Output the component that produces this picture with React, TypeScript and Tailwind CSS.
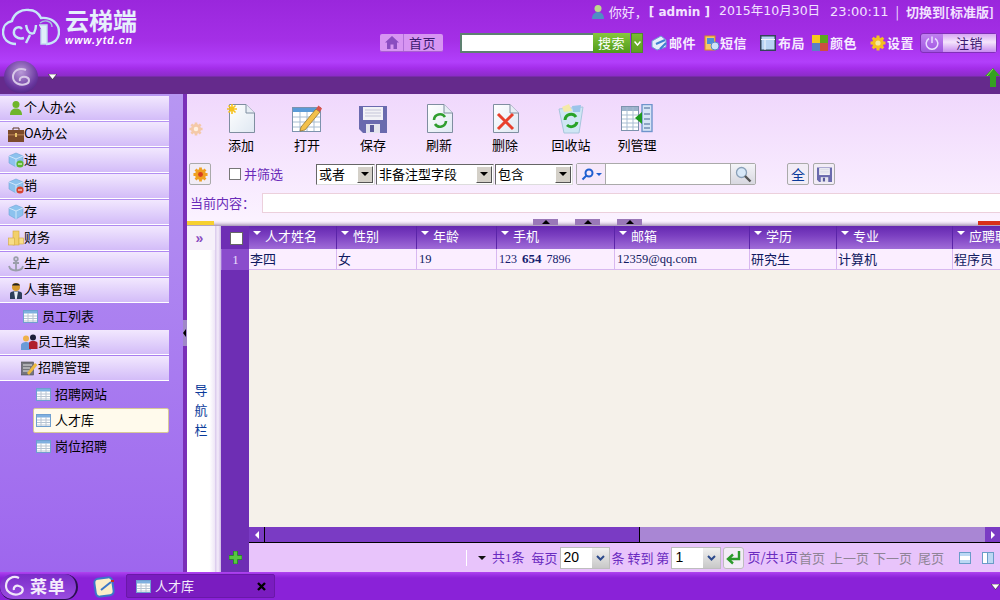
import React from "react";

const cjk = { fontFamily: '"Noto Sans CJK SC", "Liberation Sans", sans-serif' };

function Doc({ mark }: { mark: React.ReactNode }) {
  return (
    <svg width="32" height="32" viewBox="0 0 32 32">
      <defs>
        <linearGradient id="docg" x1="0" y1="0" x2="1" y2="1">
          <stop offset="0" stopColor="#ffffff" />
          <stop offset="1" stopColor="#dfe8f2" />
        </linearGradient>
      </defs>
      <path d="M4.5 1.5H21L29.5 10V29.5H4.5Z" fill="url(#docg)" stroke="#7f8ea0" />
      <path d="M21 1.5V10H29.5" fill="#e8eef5" stroke="#7f8ea0" />
      {mark}
    </svg>
  );
}

const AddIcon = () => (
  <Doc
    mark={
      <g stroke="#f6c21c" strokeWidth="1.6">
        <path d="M7 1V11M2 6H12M3.5 2.5L10.5 9.5M10.5 2.5L3.5 9.5" />
      </g>
    }
  />
);
const RefreshIcon = () => (
  <Doc
    mark={
      <g fill="none" stroke="#2f9e2f" strokeWidth="2.6">
        <path d="M11 17A6 6 0 0 1 22 14" />
        <path d="M23 18A6 6 0 0 1 12 21" />
      </g>
    }
  />
);
const DeleteIcon = () => (
  <Doc mark={<path d="M9 11L24 26M24 11L9 26" stroke="#e8402c" strokeWidth="3" />} />
);
const OpenIcon = () => (
  <svg width="32" height="32" viewBox="0 0 32 32">
    <rect x="1.5" y="4.5" width="28" height="24" fill="#fff" stroke="#7d93ad" />
    <rect x="2" y="5" width="27" height="4" fill="#5b9bd8" />
    <path d="M2 14H29M2 19H29M2 24H29M9 9V28M16 9V28M23 9V28" stroke="#a9bdd2" />
    <path d="M10 24L25 6L29 9L14 27L9 28Z" fill="#f3c04a" stroke="#8a6a22" strokeWidth=".7" />
    <path d="M25 6L27.5 2.5L31 5.5L29 9Z" fill="#d9534a" />
  </svg>
);
const SaveIcon = ({ s = 28 }: { s?: number }) => (
  <svg width={s} height={s} viewBox="0 0 28 28">
    <path d="M0 1H28V28H4L0 24Z" fill="#6a6aae" />
    <rect x="4" y="2" width="20" height="13" fill="#f2f2f6" />
    <path d="M6 5H22M6 8H22M6 11H22" stroke="#c5c5d8" />
    <rect x="7" y="19" width="14" height="9" fill="#e4e4ee" />
    <rect x="11" y="20" width="4" height="7" fill="#5a5a9a" />
  </svg>
);
const BinIcon = () => (
  <svg width="30" height="32" viewBox="0 0 30 32">
    <path d="M3 6L27 4L23 30H8Z" fill="#cfe6f4" stroke="#a8c6dc" />
    <path d="M6 4L13 1L16 8L8 9Z" fill="#f4e9a8" />
    <path d="M16 3L25 2L24 9L17 9Z" fill="#9cc4ea" />
    <g fill="none" stroke="#27a327" strokeWidth="3">
      <path d="M9 17A6 6 0 0 1 20 14" />
      <path d="M21 19A6 6 0 0 1 11 22" />
    </g>
  </svg>
);
const ColsIcon = () => (
  <svg width="32" height="30" viewBox="0 0 32 30">
    <rect x="0.5" y="2.5" width="17" height="24" fill="#fff" stroke="#7d93ad" />
    <rect x="1" y="3" width="16" height="4" fill="#9db3cc" />
    <path d="M1 11H17M1 15H17M1 19H17M1 23H17M6 3V26M12 3V26" stroke="#a9bdd2" />
    <rect x="21" y="0.5" width="10" height="27" fill="#d6e4f6" stroke="#6f94cc" strokeWidth="1.4" />
    <path d="M23 4H29M23 10H29M23 15H29M23 20H29M23 24H29" stroke="#8ba4c4" strokeWidth="2" />
    <path d="M21 8V20L14 14Z" fill="#1e9a1e" />
  </svg>
);
const Gear = ({ s = 16, c = "#f0a020", h = "#fff2c0" }: { s?: number; c?: string; h?: string }) => (
  <svg width={s} height={s} viewBox="0 0 16 16">
    <g stroke={c} strokeWidth="3">
      <path d="M8 0.5V15.5M0.5 8H15.5M2.7 2.7L13.3 13.3M13.3 2.7L2.700 13.300" />
    </g>
    <circle cx="8" cy="8" r="5.8" fill={c} />
    <circle cx="8" cy="8" r="2.6" fill={h} />
  </svg>
);
const Grid = () => (
  <svg width="15" height="13" viewBox="0 0 15 13" className="shrink-0">
    <rect x="0.5" y="0.5" width="14" height="12" fill="#fff" stroke="#6f9fd0" />
    <rect x="1" y="1" width="13" height="2.5" fill="#7fb0e0" />
    <path d="M1 6H14M1 8.5H14M1 11H14M5 3V12M10 3V12" stroke="#b8c4d2" />
  </svg>
);
const Box = ({ badge }: { badge?: string }) => (
  <svg width="16" height="16" viewBox="0 0 16 16">
    <path d="M1 4L8 1L15 4V11L8 15L1 11Z" fill="#8cc2ee" stroke="#6ea4d6" strokeWidth=".6" />
    <path d="M1 4L8 7L15 4M8 7V15" fill="none" stroke="#cfe6fa" />
    {badge && <circle cx="12" cy="12" r="3.6" fill={badge} />}
    {badge && <path d="M10 12H14" stroke="#fff" />}
  </svg>
);
const Person = ({ c = "#6fb52a" }: { c?: string }) => (
  <svg width="14" height="16" viewBox="0 0 14 16">
    <circle cx="7" cy="4.5" r="3.5" fill={c} />
    <path d="M1 15C1 10 4 8.5 7 8.5S13 10 13 15Z" fill={c} />
  </svg>
);

const iconNodes: Record<string, React.ReactNode> = {
  person: <Person />,
  brief: (
    <svg width="16" height="15" viewBox="0 0 16 15">
      <rect x="0" y="3" width="16" height="12" fill="#7b4a2b" />
      <path d="M5 3V1H11V3" fill="none" stroke="#5b3620" />
      <rect x="0" y="7" width="16" height="1.5" fill="#a77248" />
      <rect x="7" y="6" width="2" height="4" fill="#e9c46a" />
    </svg>
  ),
  in: <Box badge="#5cb531" />,
  out: <Box badge="#d8432f" />,
  box: <Box />,
  coin: (
    <svg width="16" height="16" viewBox="0 0 16 16">
      <rect x="5" y="1" width="6" height="14" fill="#f2d06a" stroke="#d2a83c" strokeWidth=".6" />
      <rect x="0.5" y="8" width="6" height="7" fill="#f7dd88" stroke="#d2a83c" strokeWidth=".6" />
      <rect x="11" y="8" width="4.5" height="6" fill="#f7dd88" stroke="#d2a83c" strokeWidth=".6" />
    </svg>
  ),
  anchor: (
    <svg width="16" height="16" viewBox="0 0 16 16" fill="none" stroke="#9a9eaa" strokeWidth="1.8">
      <circle cx="8" cy="3" r="1.8" />
      <path d="M8 5V14M5 7H11M1 10C2 14 5 14.5 8 14.5S14 14 15 10" />
    </svg>
  ),
  hr: (
    <svg width="14" height="17" viewBox="0 0 14 17">
      <circle cx="7" cy="5" r="4" fill="#d69a2c" />
      <path d="M3 3.5C4 0.5 10 0.5 11 3.5Z" fill="#222" />
      <path d="M1 17V11.5C1 10 4 9 7 9S13 10 13 11.5V17Z" fill="#2d3f5c" />
      <path d="M5 9.5H9L7.8 17H6.2Z" fill="#e8f0f8" />
    </svg>
  ),
  people: (
    <svg width="17" height="16" viewBox="0 0 17 16">
      <circle cx="5" cy="4.5" r="3" fill="#efb14a" />
      <path d="M0 16V11C0 9 3 8 5 8S10 9 10 11V16Z" fill="#6a9ad8" />
      <circle cx="12" cy="3.5" r="3" fill="#1d1d3a" />
      <path d="M8 15V9C8 7.5 10 7 12 7S16.500 7.500 16.500 9V15Z" fill="#b01f2e" />
    </svg>
  ),
  note: (
    <svg width="17" height="16" viewBox="0 0 17 16">
      <rect x="0.5" y="2" width="12" height="13" fill="#75757d" stroke="#4a4a50" strokeWidth=".6" />
      <path d="M2 5H11M2 8H9M2 11H8" stroke="#e8e8e8" />
      <path d="M6 13L14 3L16.500 5L8 15Z" fill="#edb93e" />
    </svg>
  ),
};

function Item({ icon, label, pl }: { icon: string; label: string; pl: string }) {
  return (
    <div className={`h-[25px] mb-[1px] w-[169px] flex items-center border-b border-white bg-gradient-to-b from-[#f2e8fe] to-[#d3bcf8] text-[13px] text-black ${pl}`}>
      <span className="w-[17px] flex justify-center shrink-0">{iconNodes[icon]}</span>
      <span className="mb-[2px]">{label}</span>
    </div>
  );
}
function Sub({ label, indent, active }: { label: string; indent: string; active?: boolean }) {
  return (
    <div className={`h-[26px] flex items-start text-[13px] text-black ${indent}`}>
      <div className={`flex items-center gap-[4px] h-[25px] w-full ${active ? "bg-[#fffaec] border border-[#d8c898] rounded-[2px]" : "border border-transparent"}`}>
        <span className="ml-[2px] flex"><Grid /></span>
        <span className="mb-[2px]">{label}</span>
      </div>
    </div>
  );
}

function Tool({ icon, label }: { icon: React.ReactNode; label: string }) {
  return (
    <div className="w-[66px] flex flex-col items-center">
      <div className="h-[32px] flex items-center justify-center">{icon}</div>
      <div className="mt-[2px] text-[13px] leading-[16px] text-black">{label}</div>
    </div>
  );
}

function Sel({ label, w }: { label: string; w: string }) {
  return (
    <div className={`${w} h-[21px] bg-white border border-t-[#666] border-l-[#666] border-r-[#ddd] border-b-[#ddd] flex items-center justify-between text-[13px] text-black pl-[2px] pr-[1px]`}>
      <span>{label}</span>
      <span className="w-[16px] h-[17px] bg-[#d4d0c8] border border-t-white border-l-white border-r-[#555] border-b-[#555] flex items-center justify-center">
        <span className="w-0 h-0 border-x-[4px] border-x-transparent border-t-[4px] border-t-black" />
      </span>
    </div>
  );
}

function Caret({ c = "#fff" }: { c?: string }) {
  return <span className="block w-0 h-0 border-x-[4px] border-x-transparent border-t-[4px]" style={{ borderTopColor: c }} />;
}

const cols = [
  { t: "人才姓名", w: "w-[88px]", v: "李四", cjk: true },
  { t: "性别", w: "w-[80px]", v: "女", cjk: true },
  { t: "年龄", w: "w-[80px]", v: "19" },
  { t: "手机", w: "w-[118px]", v: "phone" },
  { t: "邮箱", w: "w-[135px]", v: "12359@qq.com" },
  { t: "学历", w: "w-[87px]", v: "研究生", cjk: true },
  { t: "专业", w: "w-[116px]", v: "计算机", cjk: true },
  { t: "应聘职位", w: "w-[60px]", v: "程序员", cjk: true },
];

function PagerSelect({ v }: { v: string }) {
  return (
    <div className="w-[50px] h-[22px] bg-white border border-[#bdbdbd] flex items-center justify-between">
      <span className="pl-[3px] text-[14px] text-black" style={{ fontFamily: '"Liberation Sans", sans-serif' }}>{v}</span>
      <span className="w-[17px] h-full bg-gradient-to-b from-[#f0f0f0] to-[#c8c8c8] flex items-center justify-center">
        <svg width="9" height="6" viewBox="0 0 9 6"><path d="M1 1L4.500 4.500L8 1" fill="none" stroke="#2c4a8c" strokeWidth="2" /></svg>
      </span>
    </div>
  );
}

export default function App() {
  return (
    <div className="w-[1000px] h-[600px] overflow-hidden flex flex-col" style={cjk}>
      {/* Header */}
      <header className="h-[94px] shrink-0 flex flex-col bg-[linear-gradient(180deg,#9a27dc_0px,#a42fe6_40px,#b23ffb_62px,#a42eea_68px,#8c2cc8_76px,#652a8c_77px,#652a8c_94px)]">
        <div className="h-[60px] flex">
          <div className="w-[380px] shrink-0 flex items-start pt-[7px] pl-[2px]">
            <svg width="58" height="40" viewBox="0 0 58 40" fill="none" stroke="#c8e6f8" strokeWidth="2.4">
              <path d="M14 37C6 37 1 32 1 25C1 19 5 15 10 14C12 6 20 2 27 3C33 3 37 7 39 11C49 10 57 16 57 25C57 32 52 37 44 37" />
              <path d="M22 31C15 33 11 28 12 24C13 20 18 19 20 22" />
              <path d="M24 18C25 24 28 28 32 26C33 24 34 21 34 18M28 28L24 36" />
              <path d="M37 18H45V37H39V22" fill="#dfeffa" stroke="#c0dcee" strokeWidth="1.4" />
              <path d="M38 16C43 12 50 14 50 20" stroke="#a8c4e0" strokeWidth="1.4" />
            </svg>
            <div className="ml-[5px] text-white">
              <div className="text-[24px] leading-[24px] font-bold text-[#e6f0fb] mt-[1px]">云梯端</div>
              <div className="text-[10.5px] leading-[12px] mt-[2px] italic font-bold tracking-[1px]" style={{ fontFamily: '"Liberation Sans", sans-serif' }}>www.ytd.cn</div>
            </div>
          </div>
          <div className="flex-1 flex flex-col">
            <div className="h-[21px] pt-[2px] flex items-center justify-end text-[#f2e2ff] text-[13px] whitespace-nowrap">
              <span className="mr-[4px] flex"><svg width="14" height="15" viewBox="0 0 14 15"><circle cx="7" cy="4.500" r="3.500" fill="#bcd98a" /><path d="M1 15C1 10 4 8 7 8S13 10 13 15Z" fill="#4f8ec4" /></svg></span>
              <span>你好，</span>
              <span className="font-bold ml-[1px] text-[12px]" style={{ fontFamily: '"DejaVu Sans", sans-serif' }}>[ admin ]</span>
              <span className="ml-[9px] text-[12.5px]" style={{ fontFamily: '"DejaVu Sans", "Noto Sans CJK SC", sans-serif' }}>2015年10月30日</span>
              <span className="ml-[10px] text-[13px]" style={{ fontFamily: '"DejaVu Sans", sans-serif' }}>23:00:11</span>
              <span className="mx-[7px]">|</span>
              <span className="font-bold text-[13px] w-[94px] overflow-hidden">切换到[标准版]</span>
            </div>
            <div className="flex items-center h-[20px] mt-[12px] text-[13px] tracking-[0.5px] font-bold text-[#f6ecff] whitespace-nowrap">
              <div className="w-[63px] h-[18px] bg-[#d795f2] rounded-[2px] border-b border-[#a860d0] flex items-center font-normal text-[#3c1a70]">
                <svg width="14" height="13" viewBox="0 0 14 13" className="ml-[5px]"><path d="M7 0L14 6.500H12V13H8.500V8.500H5.500V13H2V6.500H0Z" fill="#8a4cc0" /></svg>
                <span className="w-[1px] h-full bg-[#b070d8] ml-[4px]" />
                <span className="ml-[5px]">首页</span>
              </div>
              <div className="ml-[17px] w-[133px] h-[20px] bg-white border-2 border-[#5d8070] border-r-0" />
              <div className="w-[37px] h-[20px] bg-gradient-to-b from-[#86c83c] to-[#4f9a18] flex items-center justify-center text-white font-normal">搜索</div>
              <div className="ml-[1px] w-[12px] h-[20px] bg-gradient-to-b from-[#78bc30] to-[#5da020] border border-[#4f8c2c] flex items-center justify-center">
                <svg width="7" height="5" viewBox="0 0 7 5"><path d="M.5.5L3.500 4L6.500.5" fill="none" stroke="#fff" strokeWidth="1.500" /></svg>
              </div>
              <span className="ml-[8px] flex items-center gap-[2px]">
                <svg width="16" height="16" viewBox="0 0 16 16"><path d="M1 6L10 1L15 5V12L6 15L1 12Z" fill="#e4eefa" stroke="#6f9ed6" /><path d="M5 9L14 5M9 14L15 8" stroke="#3f7fd0" strokeWidth="2" /></svg>
                邮件
              </span>
              <span className="ml-[8px] flex items-center">
                <svg width="16" height="16" viewBox="0 0 16 16"><rect x="1" y="1" width="10" height="14" fill="#f5c96a" stroke="#d88e20" /><rect x="3" y="3" width="7" height="6" fill="#4f8ed8" /><circle cx="11" cy="11" r="4" fill="#cfe2f8" stroke="#5588c8" /></svg>
                短信
              </span>
              <span className="ml-[13px] flex items-center gap-[2px]">
                <svg width="16" height="16" viewBox="0 0 16 16"><rect x=".75" y=".75" width="14.500" height="14.500" fill="#b8d4f4" stroke="#33445a" strokeWidth="1.500" /><path d="M1 4.500H15M5 4.500V15" stroke="#f2f6fc" /></svg>
                布局
              </span>
              <span className="ml-[7px] flex items-center gap-[2px]">
                <svg width="16" height="16" viewBox="0 0 16 16"><rect width="8" height="8" fill="#f6c81c" /><rect x="8" width="8" height="8" fill="#5ca81c" /><rect y="8" width="8" height="8" fill="#5a80c4" /><rect x="8" y="8" width="8" height="8" fill="#cc5040" /></svg>
                颜色
              </span>
              <span className="ml-[13px] flex items-center gap-[1px]">
                <Gear s={16} c="#f4c020" h="#f6e8a0" />
                设置
              </span>
              <div className="ml-[6px] w-[77px] h-[20px] rounded-[3px] border border-[#8030b8] bg-gradient-to-b from-[#c080f0] to-[#a055e0] flex items-center font-normal text-[#3c1a70]">
                <div className="w-[22px] flex justify-center">
                  <svg width="14" height="14" viewBox="0 0 14 14" fill="none" stroke="#eadcff" strokeWidth="1.500"><path d="M4 2.500A5.800 5.800 0 1 0 10 2.500M7 0.500V7" /></svg>
                </div>
                <div className="flex-1 h-full flex items-center justify-center bg-[linear-gradient(180deg,#d8a8f4,#f4e4fc_45%,#c88cf0)]">注销</div>
              </div>
            </div>
          </div>
        </div>
        <div className="h-[34px] flex items-center justify-between">
          <div className="flex items-center pl-[4px] -mt-[1px]">
            <div className="w-[34px] h-[32px] rounded-full bg-[radial-gradient(circle_at_50%_35%,#b99ad8,#6a38a0_60%,#40186c)] flex items-center justify-center">
              <svg width="22" height="20" viewBox="0 0 22 20" fill="none" stroke="#d8c8e8" strokeWidth="2"><path d="M16 3C9 0 3 4 3 10C3 16 10 19 16 17C20 16 20 11 16 10C12 9 9 11 10 14" /></svg>
            </div>
            <svg width="9" height="6" viewBox="0 0 9 6" className="ml-[10px]"><path d="M0 0H9L4.500 5.500Z" fill="#fff" stroke="#222" strokeWidth=".6" /></svg>
          </div>
          <svg width="15" height="19" viewBox="0 0 15 19" className="mt-[1px]"><path d="M8 0L15 8H11V19H5V8H0Z" fill="#35a020" /><path d="M8 1L2 8" stroke="#8ce060" /></svg>
        </div>
      </header>

      {/* Main */}
      <div className="flex-1 min-h-0 flex">
        <aside className="relative w-[187px] shrink-0 flex bg-gradient-to-b from-[#b796f2] to-[#9e66ee]">
          <div className="w-[183px] pt-[2px] flex flex-col">
            <Item icon="person" label="个人办公" pl="pl-[7px]" />
            <Item icon="brief" label="OA办公" pl="pl-[7px]" />
            <Item icon="in" label="进" pl="pl-[7px]" />
            <Item icon="out" label="销" pl="pl-[7px]" />
            <Item icon="box" label="存" pl="pl-[7px]" />
            <Item icon="coin" label="财务" pl="pl-[7px]" />
            <Item icon="anchor" label="生产" pl="pl-[7px]" />
            <Item icon="hr" label="人事管理" pl="pl-[7px]" />
            <div className="w-[169px]"><Sub label="员工列表" indent="pl-[20px]" /></div>
            <Item icon="people" label="员工档案" pl="pl-[21px]" />
            <Item icon="note" label="招聘管理" pl="pl-[21px]" />
            <div className="w-[169px]"><Sub label="招聘网站" indent="pl-[33px]" /></div>
            <div className="w-[169px]"><Sub label="人才库" indent="pl-[33px]" active /></div>
            <div className="w-[169px]"><Sub label="岗位招聘" indent="pl-[33px]" /></div>
          </div>
          <div className="w-[4px] bg-[#7a2fb8]" />
          <div className="absolute left-[183px] top-[226px] w-[4px] h-[26px] bg-[#a088c8] flex items-center">
            <span className="w-0 h-0 border-y-[4px] border-y-transparent border-r-[3px] border-r-black" />
          </div>
        </aside>

        <main className="flex-1 min-w-0 flex flex-col">
          {/* Toolbar panel */}
          <div className="h-[125px] shrink-0 bg-gradient-to-b from-[#f0d8fc] to-[#fbf2ff] flex flex-col">
            <div className="h-[62px] flex pt-[9px] relative">
              <div className="w-[21px] flex pl-[2px] pt-[19px]"><Gear s={14} c="#f4c9a8" h="#fff0e0" /></div>
              <div className="flex">
                <Tool icon={<AddIcon />} label="添加" />
                <Tool icon={<OpenIcon />} label="打开" />
                <Tool icon={<SaveIcon />} label="保存" />
                <Tool icon={<RefreshIcon />} label="刷新" />
                <Tool icon={<DeleteIcon />} label="删除" />
                <Tool icon={<BinIcon />} label="回收站" />
                <Tool icon={<ColsIcon />} label="列管理" />
              </div>
            </div>
            <div className="mt-[7px] h-[22px] flex items-center pl-[2px] whitespace-nowrap text-[13px]">
              <div className="w-[22px] h-[22px] border border-[#aaa] rounded-[2px] bg-[#f2ecf6] flex items-center justify-center"><Gear s={15} c="#f0a020" h="#d84020" /></div>
              <div className="ml-[18px] w-[12px] h-[12px] border border-[#777] bg-white" />
              <span className="ml-[3px] text-[#6a2bb8]">并筛选</span>
              <div className="ml-[33px]"><Sel label="或者" w="w-[59px]" /></div>
              <div className="ml-[1px]"><Sel label="非备注型字段" w="w-[118px]" /></div>
              <div className="ml-[1px]"><Sel label="包含" w="w-[78px]" /></div>
              <div className="ml-[3px] w-[180px] h-[22px] border border-[#aaa] rounded-[2px] bg-white flex">
                <div className="w-[29px] bg-[#f6e8fa] border-r border-[#aaa] flex items-center justify-center gap-[2px]">
                  <svg width="13" height="13" viewBox="0 0 13 13" fill="none" stroke="#1f5fd0" strokeWidth="2"><circle cx="8" cy="5" r="3.500" /><path d="M5.500 7.500L1.500 11.500" /></svg>
                  <span className="w-0 h-0 border-x-[3px] border-x-transparent border-t-[3px] border-t-[#1f5fd0]" />
                </div>
                <div className="flex-1" />
                <div className="w-[25px] bg-gradient-to-b from-[#f4f4f8] to-[#d8d8e0] border-l border-[#aaa] flex items-center justify-center">
                  <svg width="17" height="17" viewBox="0 0 17 17" fill="none"><circle cx="6.500" cy="6.500" r="5" fill="#d8e8f8" stroke="#8aa0b8" strokeWidth="1.300" /><path d="M10 10L15.500 15.500" stroke="#555" strokeWidth="2.400" /></svg>
                </div>
              </div>
              <div className="ml-[31px] w-[22px] h-[22px] border border-[#aaa] rounded-[2px] bg-[#f2ecf6] flex items-center justify-center text-[14px] text-[#0a3a9a]">全</div>
              <div className="ml-[4px] w-[22px] h-[22px] border border-[#aaa] rounded-[2px] bg-[#f2ecf6] flex items-center justify-center"><SaveIcon s={15} /></div>
            </div>
            <div className="mt-[8px] h-[20px] flex items-center pl-[3px] text-[13px] text-[#6a2bb8]">
              <span className="w-[72px]">当前内容：</span>
              <div className="flex-1 h-[20px] bg-white border border-[#ecd0dc] border-r-0" />
            </div>
            <div className="flex-1" />
          </div>

          {/* Split strip */}
          <div className="relative h-[7px] shrink-0 bg-[linear-gradient(180deg,#fbf2ff_0px,#fbf2ff_2px,#e8dcee_4px,#a898b8_7px)]">
            <div className="absolute left-0 top-[2px] w-[27px] h-[4px] bg-[#f6d030]" />
            {[346, 388, 430].map((x) => (
              <div key={x} className="absolute top-0 w-[25px] h-[6px] bg-[#9a78b8] flex items-center justify-center" style={{ left: x }}>
                <span className="w-0 h-0 border-x-[4px] border-x-transparent border-b-[4px] border-b-black" />
              </div>
            ))}
            <div className="absolute right-0 top-[2px] w-[22px] h-[4px] bg-[#d83018]" />
          </div>

          {/* Work area */}
          <div className="flex-1 min-h-0 flex">
            <div className="w-[28px] shrink-0 flex flex-col items-center bg-[linear-gradient(90deg,#fff,#fff_80%,#eee6f6)]">
              <div className="h-[24px] w-full bg-[#f6f0fa] pt-[1px] pr-[3px] flex items-center justify-center text-[14px] text-[#8a4cc0] font-bold" style={{ fontFamily: '"Liberation Sans", sans-serif' }}>»</div>
              <div className="flex-1 flex flex-col items-center text-[13px] leading-[20px] text-[#0a3a9a] pt-[130px]">
                <span>导</span>
                <span>航</span>
                <span>栏</span>
              </div>
            </div>
            <div className="w-[6px] shrink-0 bg-[linear-gradient(90deg,#d8c8ec,#f4ecfa_50%,#cdb8e4)]" />
            <div className="w-[28px] shrink-0 bg-[#6e2eb4] flex flex-col">
              <div className="h-[23px] flex items-center justify-center pl-[2px] pt-[2px]">
                <div className="w-[13px] h-[13px] bg-white border border-[#666]" />
              </div>
              <div className="h-[21px] bg-[#8a4ccc] border-l border-[#a070d8] flex items-center justify-center text-[12px] text-[#f0e0ff]" style={{ fontFamily: '"Liberation Serif", serif' }}>1</div>
              <div className="flex-1" />
              <div className="h-[29px] flex items-center justify-center">
                <svg width="13" height="13" viewBox="0 0 13 13"><path d="M4.500 0H8.500V4.500H13V8.500H8.500V13H4.500V8.500H0V4.500H4.500Z" fill="#58c840" stroke="#1e8a1e" strokeWidth=".8" /></svg>
              </div>
            </div>
            <div className="flex-1 min-w-0 flex flex-col bg-[#f5f1ea]">
              <div className="h-[23px] flex shrink-0 bg-[linear-gradient(180deg,#6428b0,#7a3ec0_40%,#a06cd8)] text-[13px] text-white whitespace-nowrap overflow-hidden">
                {cols.map((c) => (
                  <div key={c.t} className={`${c.w} shrink-0 h-full border-r border-[#5a24a8] flex pl-[4px] pt-[2px]`}>
                    <span className="mt-[3px] mr-[4px]"><Caret /></span>
                    <span className="leading-[15px]">{c.t}</span>
                  </div>
                ))}
              </div>
              <div className="h-[21px] flex shrink-0 bg-[#fbeeff] border-b border-[#d8b8f0] text-[13px] text-[#101a60] whitespace-nowrap overflow-hidden">
                {cols.map((c) => (
                  <div key={c.t} className={`${c.w} shrink-0 h-full border-r border-[#d8b8f0] flex items-center ${c.cjk ? "pl-[1px]" : "pl-[2px]"}`} style={c.cjk ? undefined : { fontFamily: '"Liberation Serif", serif', fontSize: 12.5 }}>
                    {c.v === "phone" ? (
                      <span className="text-[12px] text-[#14206e]">123 <b className="mx-[2px] text-[13px]">654</b> 7896</span>
                    ) : (
                      c.v
                    )}
                  </div>
                ))}
              </div>
              <div className="flex-1" />
              <div className="h-[16px] flex shrink-0 bg-[#a986d4] border-b border-black">
                <div className="w-[16px] bg-[#7a3bc4] border-r border-black flex items-center justify-center">
                  <span className="w-0 h-0 border-y-[4px] border-y-transparent border-r-[4px] border-r-white" />
                </div>
                <div className="w-[375px] bg-[#7a3bc4] border-r border-black" />
                <div className="flex-1" />
                <div className="w-[15px] bg-[#7a3bc4] flex items-center justify-center">
                  <span className="w-0 h-0 border-y-[4px] border-y-transparent border-l-[4px] border-l-white" />
                </div>
              </div>
              <div className="h-[29px] shrink-0 bg-[#e8c4fb] flex items-center text-[13px] text-[#6a2bc0] whitespace-nowrap">
                <span className="ml-[217px] w-[1px] h-[16px] bg-white" />
                <span className="ml-[11px] mr-[6px]"><Caret c="#111" /></span>
                <span>共<span style={{ fontFamily: '"Liberation Serif", serif' }}>1</span>条</span>
                <span className="ml-[7px]">每页</span>
                <span className="ml-[2px]"><PagerSelect v="20" /></span>
                <span className="ml-[2px]">条 转到 第</span>
                <span className="ml-[2px]"><PagerSelect v="1" /></span>
                <span className="ml-[2px] w-[21px] h-[22px] rounded-[3px] border border-[#bdbdbd] bg-[#f2ecf6] flex items-center justify-center">
                  <svg width="15" height="14" viewBox="0 0 15 14" fill="none" stroke="#2a9a2a" strokeWidth="2.400"><path d="M13 0V8H3M7 3.500L2 8L7 12.500" /></svg>
                </span>
                <span className="ml-[3px]">页/共<span style={{ fontFamily: '"Liberation Serif", serif' }}>1</span>页</span>
                <span className="ml-[1px] text-[#8f8496]">首页</span>
                <span className="ml-[5px] text-[#8f8496]">上一页</span>
                <span className="ml-[4px] text-[#8f8496]">下一页</span>
                <span className="ml-[6px] text-[#8f8496]">尾页</span>
                <span className="ml-[15px] w-[12px] h-[12px] bg-[#bcd8f4] border border-[#6a9cc8] flex items-center"><span className="w-full h-[4px] bg-white" /></span>
                <span className="ml-[11px] w-[12px] h-[12px] bg-[#bcd8f4] border border-[#6a9cc8] flex"><span className="w-[5px] h-full border-r border-[#6a9cc8] bg-white" /></span>
              </div>
            </div>
          </div>
        </main>
      </div>

      {/* Footer */}
      <footer className="h-[28px] shrink-0 flex items-center bg-[linear-gradient(180deg,#b044f0_0px,#9a30e4_3px,#8a22d8_6px,#8a22d8)]">
        <div className="w-[78px] h-[26px] mt-[1px] rounded-r-[13px] rounded-l-[13px] bg-[linear-gradient(180deg,#7a2cc8,#9a4ce0)] border-r-2 border-b border-[#2a1050] flex items-center pl-[3px] text-white">
          <svg width="24" height="22" viewBox="0 0 24 22" fill="none" stroke="#f0e6fa" strokeWidth="2.200"><path d="M16 3C10 0 3 4 3 11C3 17 10 21 16 19C21 17 21 12 16 11C13 10 10 12 11 15" /></svg>
          <span className="ml-[3px] text-[17px] font-bold tracking-[1px] text-[#f4ecfc]">菜单</span>
        </div>
        <div className="ml-[14px] w-[24px] flex justify-center">
          <svg width="23" height="23" viewBox="0 0 23 23"><rect x="2" y="3" width="18" height="18" rx="4" fill="#fbeec8" stroke="#3a78c8" strokeWidth="2" transform="rotate(-8 11 12)" /><path d="M8 15L18 7" stroke="#3a78c8" strokeWidth="2" /><rect x="18" y="5" width="3" height="2" fill="#c83020" /></svg>
        </div>
        <div className="ml-[10px] w-[149px] h-[24px] bg-[#7a1cc0] border border-[#6a18a8] rounded-[2px] flex items-center pl-[9px] text-[13px] text-[#f4ecfc]">
          <Grid />
          <span className="ml-[4px]">人才库</span>
          <svg width="9" height="9" viewBox="0 0 9 9" className="ml-[63px]"><path d="M1 1L8 8M8 1L1 8" stroke="#000" strokeWidth="2.400" /></svg>
        </div>
        <div className="flex-1" />
        <svg width="9" height="6" viewBox="0 0 9 6" className="mt-[2px]"><path d="M0 0H9L4.500 5.500Z" fill="#fff" stroke="#222" strokeWidth=".6" /></svg>
      </footer>
    </div>
  );
}
